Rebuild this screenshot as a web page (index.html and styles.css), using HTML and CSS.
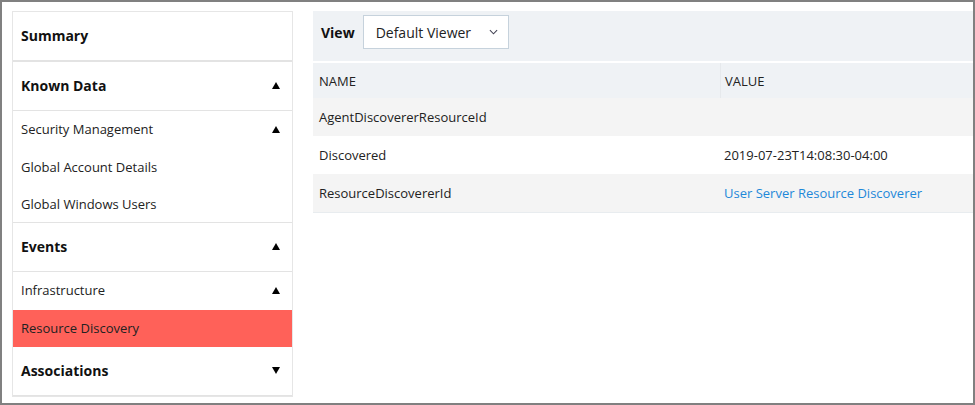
FILE: index.html
```html
<!DOCTYPE html>
<html>
<head>
<meta charset="utf-8">
<link rel="stylesheet" href="styles.css">
</head>
<body>
<div class="frame">
  <nav class="sidebar">
    <div class="sec sec-top">Summary</div>
    <div class="sec">Known Data<svg class="tri" viewBox="0 0 8 7"><polygon points="4,0 8,7 0,7"/></svg></div>
    <div class="sub">Security Management<svg class="tri" viewBox="0 0 8 7"><polygon points="4,0 8,7 0,7"/></svg></div>
    <div class="item">Global Account Details</div>
    <div class="item last">Global Windows Users</div>
    <div class="sec">Events<svg class="tri" viewBox="0 0 8 7"><polygon points="4,0 8,7 0,7"/></svg></div>
    <div class="sub">Infrastructure<svg class="tri" viewBox="0 0 8 7"><polygon points="4,0 8,7 0,7"/></svg></div>
    <div class="item active">Resource Discovery</div>
    <div class="sec end">Associations<svg class="tri" viewBox="0 0 8 7"><polygon points="0,0 8,0 4,7"/></svg></div>
  </nav>
  <main class="main">
    <div class="toolbar">
      <span class="view-label">View</span>
      <div class="select">Default Viewer<svg class="chev" viewBox="0 0 10 6"><polyline points="1,1 5,5 9,1"/></svg></div>
    </div>
    <div class="table">
      <div class="row head"><div class="c1">NAME</div><div class="c2">VALUE</div></div>
      <div class="row odd"><div class="c1">AgentDiscovererResourceId</div><div class="c2"></div></div>
      <div class="row"><div class="c1">Discovered</div><div class="c2">2019-07-23T14:08:30-04:00</div></div>
      <div class="row odd"><div class="c1">ResourceDiscovererId</div><div class="c2 link">User Server Resource Discoverer</div></div>
    </div>
  </main>
</div>
</body>
</html>
```
FILE: styles.css
```css
html, body { margin: 0; padding: 0; background: #fff; }
body { font-family: "Open Sans", "Liberation Sans", sans-serif; color: #1a1a1a; }
.frame {
  width: 975px; height: 405px; box-sizing: border-box;
  border: 2px solid #808080;
  padding: 9px 0 0 10px;
  display: flex; gap: 20px; align-items: flex-start;
}
.sidebar {
  width: 281px; box-sizing: border-box;
  border: 1px solid #e6e6e6;
  display: flex; flex-direction: column;
}
.sec {
  height: 49px; box-sizing: border-box;
  display: flex; align-items: center; justify-content: space-between;
  padding: 0 12px 1px 8px;
  font-size: 14px; font-weight: 700; color: #111;
  border-bottom: 1px solid #e3e3e3;
}
.sec-top { height: 50px; border-bottom: 2px solid #e3e3e3; padding-bottom: 1px; }
.sub, .item {
  height: 37px; box-sizing: border-box;
  display: flex; align-items: center; justify-content: space-between;
  padding: 0 12px 1px 8px;
  font-size: 13px; color: #222;
}
.sub { height: 38px; padding-bottom: 2px; }
.item.last { border-bottom: 1px solid #e3e3e3; }
.item.active { background: #ff6159; }
.tri { width: 8px; height: 7px; fill: #000; }
.main { flex: 1; display: flex; flex-direction: column; }
.toolbar {
  height: 52px; box-sizing: border-box; background: #eff2f5;
  display: flex; align-items: center; padding: 4px 8px 12px;
  gap: 8px; border-bottom: 2px solid #fff;
}
.view-label { font-size: 14px; font-weight: 700; color: #111; }
.select {
  width: 146px; height: 34px; box-sizing: border-box;
  border: 1px solid #c6d2dc; background: #fff;
  display: flex; align-items: center; justify-content: space-between;
  padding: 0 10px 0 12px; font-size: 14px; color: #222;
}
.chev { width: 9px; height: 6px; fill: none; stroke: #445; stroke-width: 1.2; }
.table { display: flex; flex-direction: column; border-bottom: 1px solid #e8ecef; }
.row { display: flex; height: 38px; align-items: stretch; font-size: 13px; color: #222; background: #fff; }
.row.head { height: 35px; background: #eff2f5; }
.row.odd { background: #f4f4f4; }
.c1 { width: 401px; padding-left: 6px; display: flex; align-items: center; }
.c2 { flex: 1; padding-left: 4px; display: flex; align-items: center; }
.head .c2 { border-left: 1px solid #e6e9ec; }
.link { color: #1e88d9; }
```
